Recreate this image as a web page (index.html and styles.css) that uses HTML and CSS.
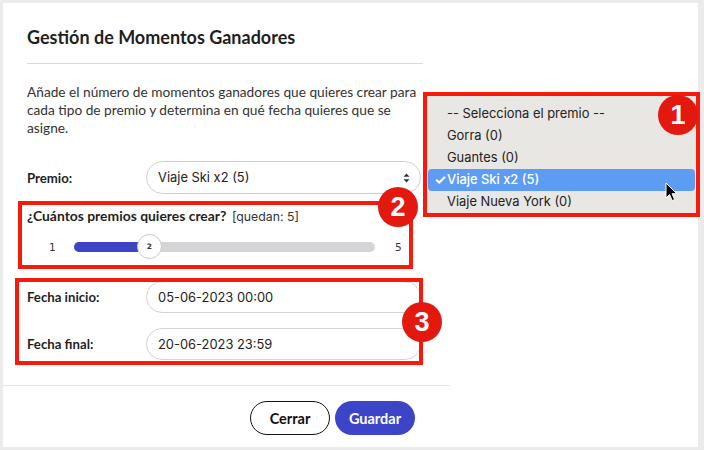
FILE: index.html
```html
<!DOCTYPE html>
<html lang="es">
<head>
<meta charset="utf-8">
<title>Gestión de Momentos Ganadores</title>
<link rel="stylesheet" href="styles.css">
</head>
<body>
<div class="screen">
  <div class="modal">
    <header class="modal-header">
      <h1 class="modal-title">Gestión de Momentos Ganadores</h1>
    </header>
    <div class="modal-body">
      <p class="intro">Añade el número de momentos ganadores que quieres crear para<br>cada tipo de premio y determina en qué fecha quieres que se<br>asigne.</p>
      <div class="field-row premio-row">
        <label class="field-label">Premio:</label>
        <div class="select-box">
          <span class="sys-text">Viaje Ski x2 (5)</span>
          <svg class="select-arrows" width="7" height="10" viewBox="0 0 7 10"><path d="M3.5 0.5 L6.5 3.8 H0.5 Z M3.5 9.5 L6.5 6.2 H0.5 Z" fill="#333"/></svg>
        </div>
      </div>
      <div class="qty">
        <div class="qty-title"><strong>¿Cuántos premios quieres crear?</strong> <span class="sys-text">[quedan: 5]</span></div>
        <div class="slider-row">
          <span class="slider-num">1</span>
          <div class="track">
            <div class="track-fill" style="width:25%"></div>
            <div class="thumb" style="left:25%">2</div>
          </div>
          <span class="slider-num">5</span>
        </div>
      </div>
      <div class="dates">
        <div class="field-row">
          <label class="field-label">Fecha inicio:</label>
          <div class="text-input sys-text">05-06-2023 00:00</div>
        </div>
        <div class="field-row">
          <label class="field-label">Fecha final:</label>
          <div class="text-input sys-text">20-06-2023 23:59</div>
        </div>
      </div>
    </div>
    <footer class="modal-footer">
      <button class="btn btn-outline">Cerrar</button>
      <button class="btn btn-primary">Guardar</button>
    </footer>
  </div>

  <div class="annot annot-1">
    <ul class="popup">
      <li>-- Selecciona el premio --</li>
      <li>Gorra (0)</li>
      <li>Guantes (0)</li>
      <li class="selected"><span class="check">✓</span>Viaje Ski x2 (5)</li>
      <li>Viaje Nueva York (0)</li>
    </ul>
  </div>
  <div class="annot annot-2"></div>
  <div class="annot annot-3"></div>

  <div class="badge badge-1">1</div>
  <div class="badge badge-2">2</div>
  <div class="badge badge-3">3</div>

  <svg class="cursor" width="13" height="20" viewBox="0 0 13 20">
    <path d="M1 1 L1 16 L4.5 12.6 L7.2 18.6 L9.6 17.5 L7 11.7 L11.8 11.7 Z" fill="#000" stroke="#fff" stroke-width="1" stroke-linejoin="round"/>
  </svg>
</div>
</body>
</html>
```

FILE: styles.css
```css
* { box-sizing: border-box; }

html, body {
  margin: 0;
  padding: 0;
  background: #ebebeb;
}

body {
  font-family: "Lato", "Open Sans", sans-serif;
  color: #222;
}

.screen {
  position: relative;
  margin: 3px 6px 3px 3px;
  height: 444px;
  background: #fff;
}

.modal {
  width: 447px;
  height: 100%;
  display: flex;
  flex-direction: column;
}

.modal-header {
  margin: 0 27px 0 24px;
  padding: 22px 0 14px;
  border-bottom: 1px solid #d9d9d9;
}

.modal-title {
  margin: 0;
  font-size: 18px;
  line-height: 24px;
  font-weight: 700;
  color: #1f1f1f;
}

.modal-body {
  padding: 19px 29px 24px 24px;
  flex: 1;
}

.intro {
  margin: 0;
  font-size: 13.7px;
  line-height: 18px;
  color: #333;
}

.sys-text {
  font-family: "Inter", "Liberation Sans", sans-serif;
}

.field-row {
  display: flex;
  align-items: center;
}

.premio-row {
  margin-top: 24px;
}

.field-label {
  width: 119px;
  flex: none;
  font-size: 13.2px;
  font-weight: 700;
  color: #1f1f1f;
}

.select-box {
  flex: 1;
  height: 33px;
  border: 1px solid #cfcfcf;
  border-radius: 17px;
  display: flex;
  align-items: center;
  justify-content: space-between;
  padding: 0 10px 0 11px;
  font-size: 12.9px;
  color: #222;
}

.qty {
  margin-top: 13px;
}

.qty-title {
  font-size: 13.9px;
  line-height: 18px;
  color: #1f1f1f;
}

.qty-title .sys-text {
  font-size: 12.3px;
  color: #333;
  margin-left: 2px;
}

.slider-row {
  display: flex;
  align-items: center;
  height: 25px;
  margin-top: 8px;
  padding-left: 22px;
}

.slider-num {
  font-family: "DejaVu Sans", sans-serif;
  font-size: 10.5px;
  color: #333;
  width: 7px;
}

.slider-row .slider-num:first-child { margin-right: 18px; }
.slider-row .slider-num:last-child { margin-left: 20px; }

.track {
  position: relative;
  width: 301px;
  height: 10px;
  border-radius: 5px;
  background: #d5d5d7;
}

.track-fill {
  height: 100%;
  border-radius: 5px;
  background: #3c45c6;
}

.thumb {
  position: absolute;
  top: 50%;
  width: 25px;
  height: 25px;
  margin: -12.5px 0 0 -12.5px;
  border-radius: 50%;
  background: #fff;
  border: 1px solid #c9c9c9;
  font-family: "DejaVu Sans", sans-serif;
  font-size: 7.5px;
  font-weight: 700;
  color: #333;
  display: flex;
  align-items: center;
  justify-content: center;
}

.dates {
  margin-top: 22px;
  display: flex;
  flex-direction: column;
  gap: 15px;
}

.text-input {
  flex: 1;
  height: 32px;
  border: 1px solid #d3d3d3;
  border-radius: 16px;
  display: flex;
  align-items: center;
  padding-left: 11px;
  font-size: 12.9px;
  color: #222;
}

.modal-footer {
  border-top: 1px solid #e4e4e4;
  padding: 15px 35px 12px 0;
  display: flex;
  justify-content: flex-end;
  gap: 5px;
}

.btn {
  height: 34px;
  border-radius: 17px;
  font-family: "Lato", "Open Sans", sans-serif;
  font-size: 14.5px;
  font-weight: 700;
  padding: 0;
  width: 80px;
  cursor: pointer;
}

.btn-outline {
  background: #fff;
  border: 1px solid #111;
  color: #111;
}

.btn-primary {
  background: #3c45c8;
  border: none;
  color: #fff;
}

/* Annotations (overlays) */
.annot {
  position: absolute;
  border: 4px solid #f51a0c;
}

.annot-1 {
  left: 420px;
  top: 89px;
  width: 277px;
  height: 125px;
  background: #e9e7e4;
}

.annot-2 {
  left: 15px;
  top: 198px;
  width: 395px;
  height: 68px;
}

.annot-3 {
  left: 12px;
  top: 275px;
  width: 408px;
  height: 87px;
}

.popup {
  list-style: none;
  margin: 0;
  padding: 7px 1px 0 1px;
  font-family: "Inter", "Liberation Sans", sans-serif;
  font-size: 12.9px;
  color: #222;
}

.popup li {
  height: 22px;
  line-height: 22px;
  padding-left: 19px;
  position: relative;
  border-radius: 4px;
}

.popup li.selected {
  background: #5c9cf2;
  color: #fff;
  font-weight: 500;
}

.check {
  position: absolute;
  left: 6px;
  top: 0;
  font-size: 14px;
  font-weight: 700;
}

.badge {
  position: absolute;
  width: 40px;
  height: 40px;
  border-radius: 50%;
  background: #e3190f;
  color: #fff;
  font-family: "Liberation Sans", sans-serif;
  font-weight: 700;
  font-size: 27px;
  display: flex;
  align-items: center;
  justify-content: center;
}

.badge-1 { left: 655px; top: 92px; }
.badge-2 { left: 375px; top: 184px; }
.badge-3 { left: 399px; top: 299px; }

.cursor {
  position: absolute;
  left: 662px;
  top: 179px;
}
```
